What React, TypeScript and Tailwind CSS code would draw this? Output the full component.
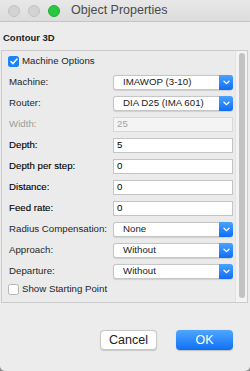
import React from "react";

const Chevron = () => (
  <svg width="7" height="5" viewBox="0 0 7 5" fill="none">
    <path d="M1 1.2 L3.5 3.6 L6 1.2" stroke="white" strokeWidth="1.3" strokeLinecap="round" strokeLinejoin="round" />
  </svg>
);

const Select = ({ value }: { value: string }) => (
  <div className="flex h-[15px] w-[120px] items-stretch rounded-[3px] border border-[#c6c6c6] bg-white shadow-[0_0.5px_1px_rgba(0,0,0,0.12)]">
    <div className="flex flex-1 items-center pl-[9px] text-[9.7px] text-[#222]">{value}</div>
    <div className="-my-px -mr-px flex w-[14px] items-center justify-center rounded-r-[3px] bg-gradient-to-b from-[#4aa2ff] to-[#0b6cf6]">
      <Chevron />
    </div>
  </div>
);

const Input = ({ value, disabled }: { value: string; disabled?: boolean }) => (
  <div
    className={`flex h-[15px] w-[120px] items-center border pl-[3px] text-[9.7px] ${
      disabled ? "border-[#d8d8d8] bg-[#f4f4f4] text-[#a3a3a3]" : "border-[#c4c4c4] bg-white text-black"
    }`}
  >
    {value}
  </div>
);

const Row = ({ label, children, dim, dark }: { label: string; children: React.ReactNode; dim?: boolean; dark?: boolean }) => (
  <div className="flex h-[21px] items-center">
    <div
      className={`w-[111px] shrink-0 pl-[7px] text-[9.7px] ${dim ? "text-[#9c9c9c]" : dark ? "text-black [-webkit-text-stroke:0.12px_black]" : "text-[#262626]"}`}
    >
      {label}
    </div>
    {children}
  </div>
);

export default function App() {
  return (
    <div className="h-[371px] w-[250px] bg-[#8a8a8a]" style={{ fontFamily: '"Liberation Sans", Arial, sans-serif' }}>
      <div className="flex h-[371px] w-[250px] flex-col overflow-hidden rounded-b-[5px] bg-[#ececec]">
        {/* Title bar */}
        <div className="relative flex h-[22px] items-center border-b border-[#c4c4c4] bg-gradient-to-b from-[#e8e8e8] to-[#dcdcdc]">
          <div className="ml-[8px] flex gap-[8px]">
            <div className="h-[12px] w-[12px] rounded-full border border-[#c2c2c2] bg-[#d3d3d3]" />
            <div className="h-[12px] w-[12px] rounded-full border border-[#c2c2c2] bg-[#d3d3d3]" />
            <div className="h-[12px] w-[12px] rounded-full border border-[#1fae35] bg-[#28c940]" />
          </div>
          <div className="ml-[11px] text-[12.5px] text-[#4a4a4a]">Object Properties</div>
        </div>

        {/* Section title */}
        <div className="flex h-[28px] items-end pb-[5px] pl-[3px] text-[9.5px] font-bold text-[#1e1e1e]">Contour 3D</div>

        {/* Panel */}
        <div className="ml-px mr-[2px] flex h-[253px] border border-[#cbcbcb] bg-[#ebebeb]">
          <div className="flex flex-1 flex-col">
            <div className="flex h-[21px] items-center pl-[6px]">
              <div className="flex h-[11px] w-[11px] items-center justify-center rounded-[2.5px] bg-[#1a82fb]">
                <svg width="8" height="7" viewBox="0 0 8 7" fill="none">
                  <path d="M1 3.6 L3 5.6 L7 1" stroke="white" strokeWidth="1.5" strokeLinecap="round" strokeLinejoin="round" />
                </svg>
              </div>
              <span className="ml-[3px] text-[9.7px] text-[#1e1e1e]">Machine Options</span>
            </div>
            <Row label="Machine:"><Select value="IMAWOP (3-10)" /></Row>
            <Row label="Router:"><Select value="DIA D25 (IMA 601)" /></Row>
            <Row label="Width:" dim><Input value="25" disabled /></Row>
            <Row label="Depth:" dark><Input value="5" /></Row>
            <Row label="Depth per step:" dark><Input value="0" /></Row>
            <Row label="Distance:" dark><Input value="0" /></Row>
            <Row label="Feed rate:" dark><Input value="0" /></Row>
            <Row label="Radius Compensation:"><Select value="None" /></Row>
            <Row label="Approach:"><Select value="Without" /></Row>
            <Row label="Departure:"><Select value="Without" /></Row>
            <div className="flex h-[14px] items-center pl-[6px]">
              <div className="h-[11px] w-[11px] rounded-[2.5px] border border-[#b5b5b5] bg-white" />
              <span className="ml-[3px] text-[9.7px] text-[#1e1e1e]">Show Starting Point</span>
            </div>
          </div>
          {/* Scrollbar */}
          <div className="flex w-[12px] justify-center border-l border-[#e2e2e2] bg-[#f3f3f3] pt-[2px] pb-[4px]">
            <div className="w-[6px] rounded-full bg-[#c2c2c2]" />
          </div>
        </div>

        {/* Buttons */}
        <div className="mt-[27px] flex justify-end gap-[19px] pr-[17px]">
          <div className="flex h-[20px] w-[57px] items-center justify-center rounded-[4px] border border-[#c8c8c8] bg-white text-[12.5px] text-[#222] shadow-[0_0.5px_1px_rgba(0,0,0,0.15)]">
            Cancel
          </div>
          <div className="flex h-[20px] w-[57px] items-center justify-center rounded-[4px] bg-gradient-to-b from-[#4ea6ff] to-[#0a6ff5] text-[12.5px] text-white shadow-[0_0.5px_1px_rgba(0,0,0,0.2)]">
            OK
          </div>
        </div>
      </div>
    </div>
  );
}
